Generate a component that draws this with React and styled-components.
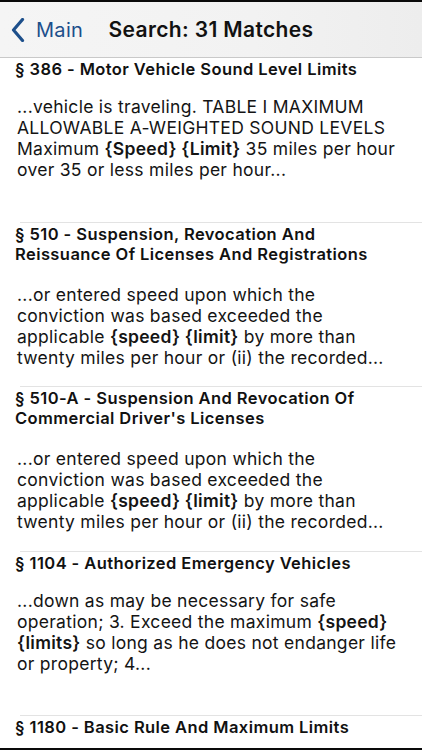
import React from 'react'
import styled, { createGlobalStyle } from 'styled-components'

const GlobalStyle = createGlobalStyle`
  html, body {
    margin: 0;
    padding: 0;
    background: #ffffff;
  }
  body {
    font-family: Inter, "Liberation Sans", Arial, sans-serif;
    -webkit-font-smoothing: antialiased;
  }
`

const results = [
  {
    title: ['§ 386 - Motor Vehicle Sound Level Limits'],
    lines: [
      ['...vehicle is traveling. TABLE I MAXIMUM'],
      ['ALLOWABLE A-WEIGHTED SOUND LEVELS'],
      ['Maximum ', { b: '{Speed} {Limit}' }, ' 35 miles per hour'],
      ['over 35 or less miles per hour...'],
    ],
  },
  {
    title: ['§ 510 - Suspension, Revocation And', 'Reissuance Of Licenses And Registrations'],
    lines: [
      ['...or entered speed upon which the'],
      ['conviction was based exceeded the'],
      ['applicable ', { b: '{speed} {limit}' }, ' by more than'],
      ['twenty miles per hour or (ii) the recorded...'],
    ],
  },
  {
    title: ['§ 510-A - Suspension And Revocation Of', "Commercial Driver's Licenses"],
    lines: [
      ['...or entered speed upon which the'],
      ['conviction was based exceeded the'],
      ['applicable ', { b: '{speed} {limit}' }, ' by more than'],
      ['twenty miles per hour or (ii) the recorded...'],
    ],
  },
  {
    title: ['§ 1104 - Authorized Emergency Vehicles'],
    lines: [
      ['...down as may be necessary for safe'],
      ['operation; 3. Exceed the maximum ', { b: '{speed}' }],
      [{ b: '{limits}' }, ' so long as he does not endanger life'],
      ['or property; 4...'],
    ],
  },
  {
    title: ['§ 1180 - Basic Rule And Maximum Limits'],
    lines: [],
  },
]

function Chevron() {
  return (
    <svg width="14" height="24" viewBox="0 0 14 24">
      <path
        d="M11.5 1.5 L2.5 12 L11.5 22.5"
        fill="none"
        stroke="#1d4f8b"
        strokeWidth="3.2"
        strokeLinecap="round"
        strokeLinejoin="round"
      />
    </svg>
  )
}

function App() {
  return (
    <Screen>
      <GlobalStyle />
      <NavBar>
        <BackButton>
          <Chevron />
          <BackLabel>Main</BackLabel>
        </BackButton>
        <NavTitle>Search: 31 Matches</NavTitle>
        <span />
      </NavBar>
      <List>
        {results.map((item, i) => (
          <Row key={i} $first={i === 0}>
            <Heading>
              {item.title.map((t, j) => (
                <Line key={j}>{t}</Line>
              ))}
            </Heading>
            {item.lines.length > 0 && (
              <Snippet $afterTwoLines={item.title.length > 1}>
                {item.lines.map((parts, j) => (
                  <Line key={j}>
                    {parts.map((p, k) =>
                      typeof p === 'string' ? p : <Match key={k}>{p.b}</Match>
                    )}
                  </Line>
                ))}
              </Snippet>
            )}
          </Row>
        ))}
      </List>
    </Screen>
  )
}

export default App

const Screen = styled.div`
  height: 750px;
  box-sizing: border-box;
  border-top: 2px solid #0a0a0a;
  border-bottom: 2px solid #0a0a0a;
  overflow: hidden;
  display: flex;
  flex-direction: column;
  background: #ffffff;
`

const NavBar = styled.div`
  height: 55px;
  flex-shrink: 0;
  display: grid;
  grid-template-columns: 1fr auto 1fr;
  align-items: center;
  background: linear-gradient(90deg, #f5f5f5 0%, #f2f2f2 60%, #ededed 100%);
  border-bottom: 1px solid #c9c9c9;
  position: relative;
  z-index: 1;
`

const BackButton = styled.div`
  display: flex;
  align-items: center;
  gap: 11px;
  padding-left: 11px;
  color: #1d4f8b;
`

const BackLabel = styled.span`
  font-size: 20px;
  font-weight: 400;
  letter-spacing: 0.3px;
`

const NavTitle = styled.div`
  font-size: 21px;
  font-weight: 600;
  color: #111111;
  letter-spacing: 0.35px;
`

const List = styled.div`
  display: flex;
  flex-direction: column;
  margin-top: -1px;
`

const Row = styled.div`
  height: 164.5px;
  flex-shrink: 0;
  box-sizing: border-box;
  padding: 2px 10px 0 15px;
  position: relative;

  &::before {
    content: '';
    position: absolute;
    top: 0;
    left: 20px;
    right: 0;
    height: 1px;
    background: ${props => (props.$first ? 'transparent' : '#e3e3e3')};
  }
`

const Heading = styled.div`
  font-size: 16.5px;
  line-height: 20px;
  font-weight: 600;
  color: #111111;
  letter-spacing: 0.42px;
`

const Snippet = styled.div`
  margin-top: ${props => (props.$afterTwoLines ? '20px' : '17px')};
  padding-left: 2px;
  font-size: 17.5px;
  line-height: 21px;
  font-weight: 400;
  color: #141414;
  letter-spacing: 0.28px;
`

const Line = styled.div`
  white-space: nowrap;
`

const Match = styled.b`
  font-weight: 600;
`
